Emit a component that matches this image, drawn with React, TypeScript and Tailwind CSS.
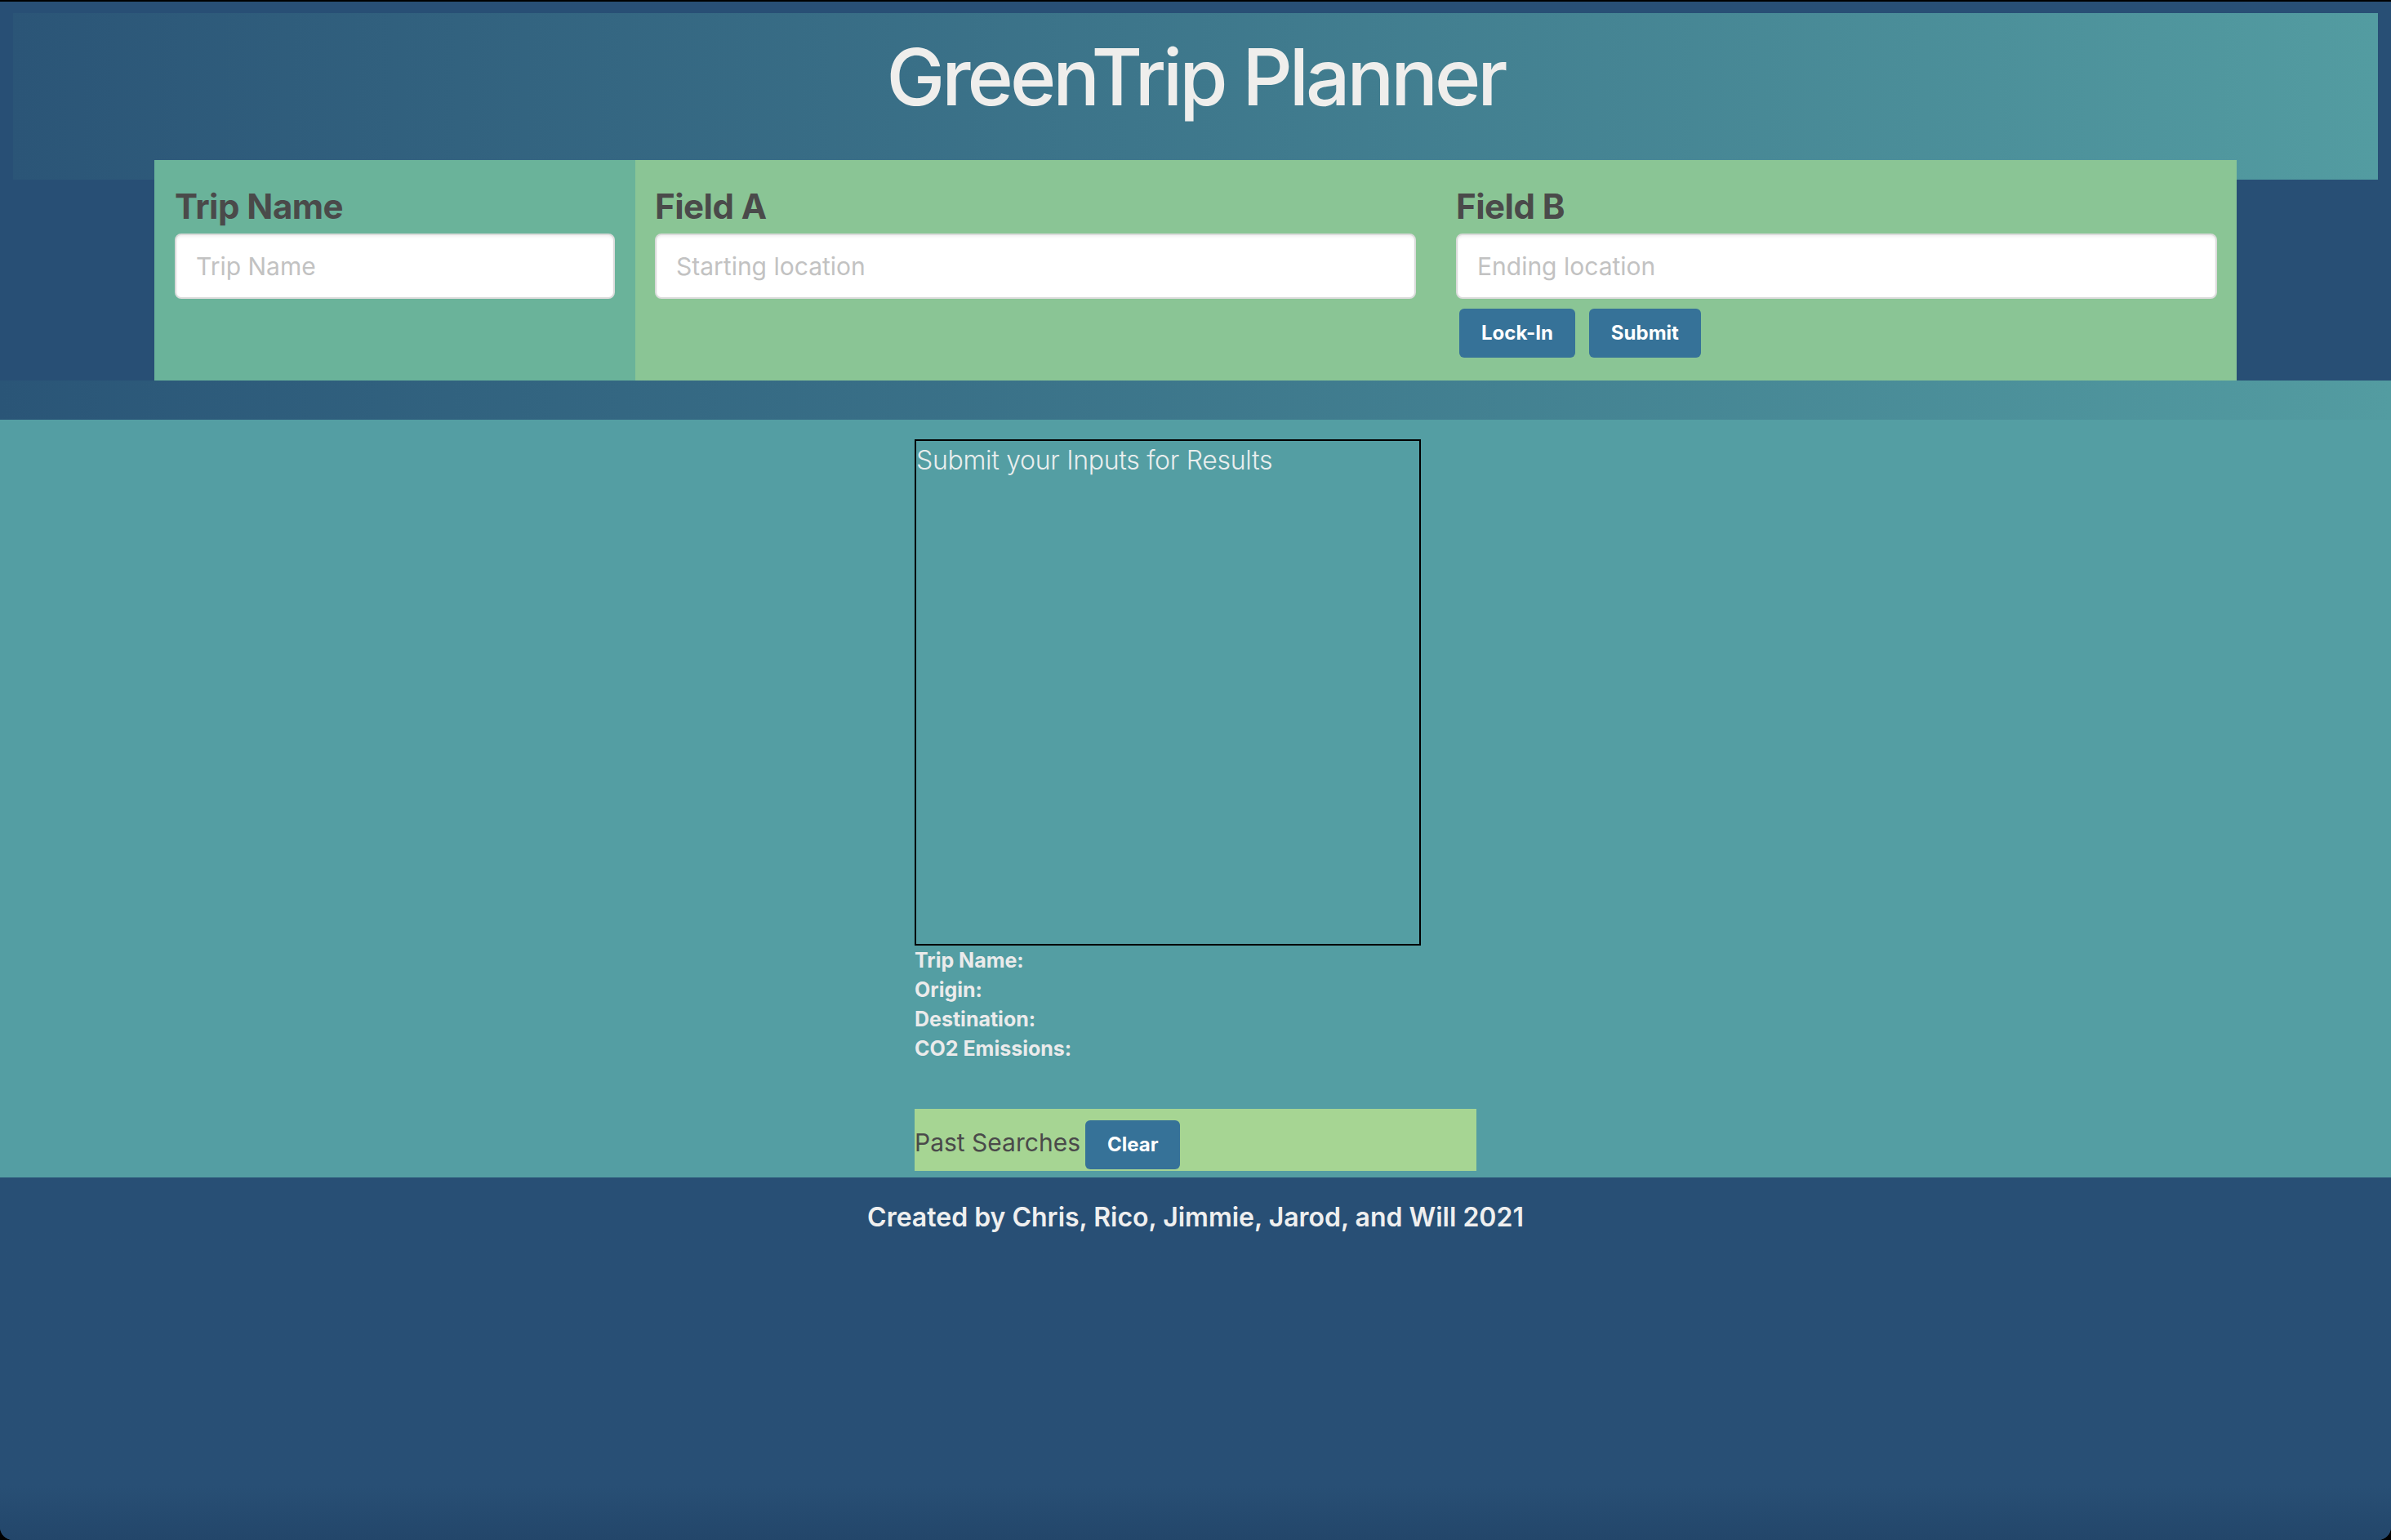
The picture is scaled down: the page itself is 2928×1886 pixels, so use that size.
import { useState } from "react";

const fieldLabel = "block text-[42px] font-bold leading-[50px] tracking-[-0.5px] text-[#4a4a4a]";
const fieldInput =
  "h-[80px] w-full rounded-[8px] border-2 border-[#dbdbdb] bg-white px-[24px] text-[30px] text-[#363636] shadow-[inset_0_2px_3px_rgba(10,10,10,0.06)] outline-none placeholder:text-[#c2c2c2]";
const smallButton =
  "h-[60px] rounded-[6px] bg-[#367298] px-[27px] text-[24px] font-bold text-white";

const resultRows = ["Trip Name:", "Origin:", "Destination:", "CO2 Emissions:"];

export default function App() {
  const [tripName, setTripName] = useState("");
  const [origin, setOrigin] = useState("");
  const [destination, setDestination] = useState("");

  return (
    <div className="bg-black pt-[2px] font-['Inter','Noto_Sans',sans-serif]">
      <div className="flex min-h-[1884px] flex-col overflow-hidden rounded-b-[16px] bg-[#284f75]">
        {/* Title banner */}
        <header className="px-[16px] pt-[14px]">
          <div className="h-[204px] bg-linear-to-r from-[#2b5577] to-[#539ca1] pt-[20px] text-center">
            <h1 className="text-[96px] font-medium leading-[116px] tracking-[-4px] text-[#efeeec]">
              GreenTrip Planner
            </h1>
          </div>
        </header>

        {/* Trip form */}
        <section className="relative mx-auto -mt-[24px] flex h-[270px] w-[2550px]">
          <div className="w-[589px] bg-[#6ab39a] px-[25px] pt-[32px]">
            <label className={fieldLabel}>Trip Name</label>
            <input
              className={`${fieldInput} mt-[8px]`}
              placeholder="Trip Name"
              value={tripName}
              onChange={(e) => setTripName(e.target.value)}
            />
          </div>
          <div className="grid flex-1 grid-cols-2 gap-[49px] bg-[#8ac595] px-[24px] pt-[32px]">
            <div>
              <label className={fieldLabel}>Field A</label>
              <input
                className={`${fieldInput} mt-[8px]`}
                placeholder="Starting location"
                value={origin}
                onChange={(e) => setOrigin(e.target.value)}
              />
            </div>
            <div>
              <label className={fieldLabel}>Field B</label>
              <input
                className={`${fieldInput} mt-[8px]`}
                placeholder="Ending location"
                value={destination}
                onChange={(e) => setDestination(e.target.value)}
              />
              <div className="mt-[12px] flex gap-[17px] pl-[4px]">
                <button className={smallButton}>Lock-In</button>
                <button className={smallButton}>Submit</button>
              </div>
            </div>
          </div>
        </section>

        <div className="h-[48px] bg-linear-to-r from-[#2a5577] to-[#539ca1]" />

        {/* Results */}
        <main className="bg-[#549ea3] pb-[8px] pt-[24px]">
          <div className="mx-auto w-[688px]">
            <div className="h-[620px] w-[620px] border-2 border-black">
              <p className="text-[32px] font-light leading-[48px] tracking-[-0.3px] text-[#e9eeee]">
                Submit your Inputs for Results
              </p>
            </div>
            <div className="text-[25px] font-bold leading-[36px] text-[#ebebeb]">
              {resultRows.map((row) => (
                <p key={row}>{row}</p>
              ))}
            </div>
            <div className="mt-[56px] flex h-[76px] items-baseline gap-[6px] bg-[#a6d593] pt-[11px]">
              <span className="text-[30px] leading-[60px] text-[#4a4a4a]">Past Searches</span>
              <button className={`${smallButton} px-[26px]`}>Clear</button>
            </div>
          </div>
        </main>

        <footer className="flex-1 bg-linear-to-b from-[#284f75] from-85% to-[#23466a] pt-[26px] text-center">
          <p className="text-[32px] font-semibold leading-[46px] text-[#efefef]">
            Created by Chris, Rico, Jimmie, Jarod, and Will 2021
          </p>
        </footer>
      </div>
    </div>
  );
}
